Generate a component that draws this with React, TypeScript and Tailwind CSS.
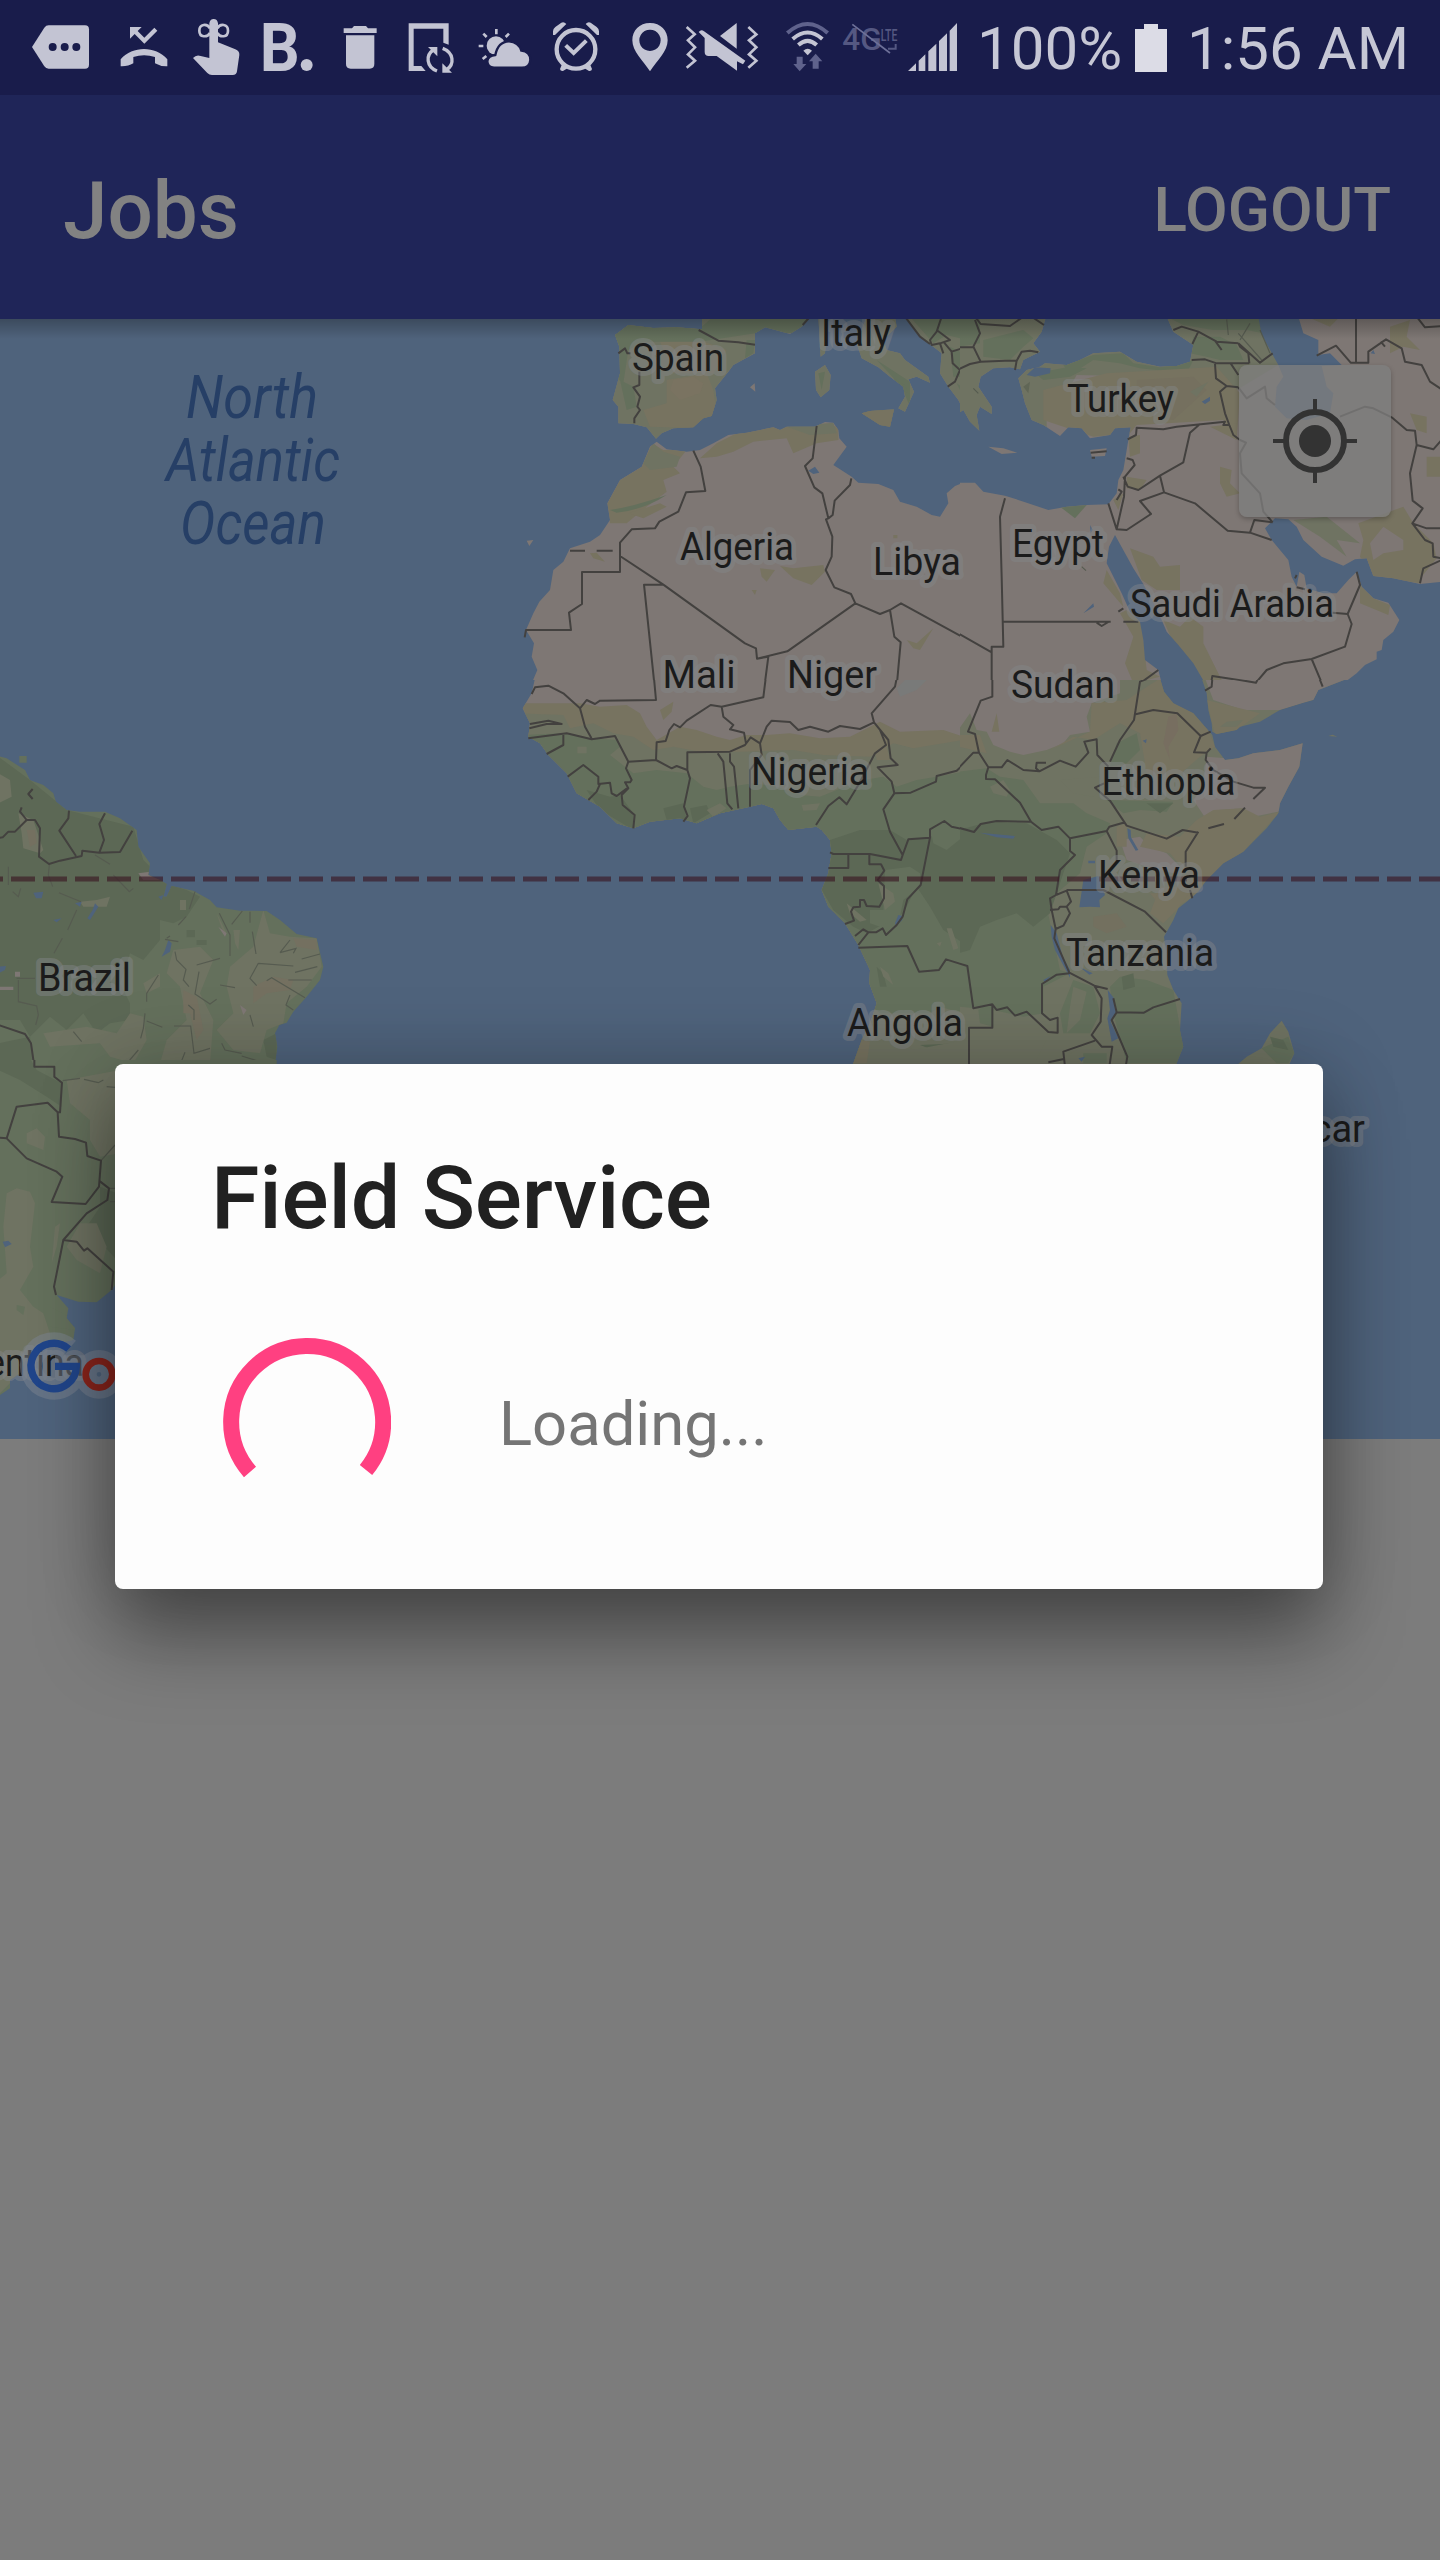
import React from "react";

const ROBOTO = "font-['Roboto',sans-serif]";

/* ---------- status bar ---------- */

type GlyphProps = { box: string; width: string; children: React.ReactNode };

function Glyph({ box, width, children }: GlyphProps) {
  return (
    <svg viewBox={box} className={`h-[95px] shrink-0 ${width}`} fill="#c3c4d3" stroke="none">
      {children}
    </svg>
  );
}

function StatusBar() {
  const ink = "#c3c4d3";
  const bar = "#191c4b";
  return (
    <div className="flex h-[95px] items-center bg-[#191c4b] text-[#c6c7d5]">
      <Glyph box="0 0 306 285" width="w-[102px]">
        <path d="M96 141 L133 83 Q138 76 146 76 H255 Q267 76 267 88 V194 Q267 206 255 206 H146 Q138 206 133 199 Z" />
        <g fill={bar}>
          <circle cx="158" cy="141" r="12" />
          <circle cx="194" cy="141" r="12" />
          <circle cx="229" cy="141" r="12" />
        </g>
      </Glyph>
      <Glyph box="306 0 234 285" width="w-[78px]">
        <path d="M390 81 H425 L413 93 L433 113 L463 83 L472 92 L433 131 L404 102 L390 116 Z" />
        <path d="M362 178 C398 137 466 137 502 178 V199 Q482 200 465 190 V171 Q432 160 400 171 V190 Q384 200 362 199 Z" />
      </Glyph>
      <Glyph box="540 0 210 285" width="w-[70px]">
        <path d="M628 70 Q630 57 641 57 Q652 57 654 70 V127 L706 148 Q719 153 718 165 L711 214 Q710 225 698 225 H636 Q628 225 622 219 L579 174 Q589 163 602 168 L628 174 Z" />
        <g fill="none" stroke={ink} strokeWidth="8">
          <path d="M630 85 C622 70 598 71 598 92 C598 113 622 113 630 99" />
          <path d="M652 85 C660 70 684 71 684 92 C684 113 660 113 652 99" />
        </g>
      </Glyph>
      <Glyph box="750 0 210 285" width="w-[70px]">
        <text x="779" y="212" fontSize="198" fontWeight="700" textLength="120" lengthAdjust="spacingAndGlyphs">
          B
        </text>
        <circle cx="920" cy="195" r="18" />
      </Glyph>
      <Glyph box="960 0 210 285" width="w-[70px]">
        <path d="M1031 85 H1056 L1062 78 H1098 L1104 85 H1130 V99 H1031 Z" />
        <path d="M1038 106 H1123 V192 Q1123 206 1109 206 H1052 Q1038 206 1038 192 Z" />
      </Glyph>
      <Glyph box="1170 0 231 285" width="w-[77px]">
        <path d="M1226 70 H1346 V134 L1330 128 V86 H1241 V198 H1264 L1277 213 H1226 Z" />
        <g fill="none" stroke={ink} strokeWidth="10">
          <path d="M1311 213 C1278 200 1277 165 1300 150" />
          <path d="M1328 145 C1362 158 1364 193 1340 209" />
        </g>
        <path d="M1284 141 H1312 V169 Z M1327 190 V218 H1356 Z" />
      </Glyph>
      <Glyph box="-39 0 219 285" width="w-[73px]">
        <circle cx="48" cy="137" r="28" />
        <g fill="none" stroke={ink} strokeWidth="8">
          <path d="M49 87 V103 M87 101 L77 111 M10 101 L20 111 M-4 138 H10 M8 177 L19 168" />
        </g>
        <path
          stroke={bar}
          strokeWidth="7"
          d="M42 203 Q22 202 22 183 Q24 167 46 165 Q54 125 87 124 Q116 126 124 152 Q151 155 151 180 Q149 203 126 203 Z"
        />
      </Glyph>
      <Glyph box="180 0 210 285" width="w-[70px]">
        <circle cx="288" cy="148" r="58" fill="none" stroke={ink} strokeWidth="13" />
        <path d="M257 136 L281 159 L319 122" fill="none" stroke={ink} strokeWidth="12" />
        <path d="M219 105 V94 Q219 86 226 81 L244 68 Q252 64 259 72 L225 105 Z M357 105 V94 Q357 86 350 81 L332 68 Q324 64 317 72 L351 105 Z" />
        <path d="M246 193 L240 207 Q241 214 249 213 L265 203 Z M330 193 L336 207 Q335 214 327 213 L311 203 Z" />
      </Glyph>
      <Glyph box="390 0 210 285" width="w-[70px]">
        <path
          fillRule="evenodd"
          d="M510 69 C478 69 457 92 457 121 C457 155 488 180 510 214 C532 180 563 155 563 121 C563 92 542 69 510 69 Z M510 89 A32 32 0 1 1 509.900 89 Z"
        />
      </Glyph>
      <Glyph box="600 0 270 285" width="w-[90px]">
        <g fill="none" stroke={ink} strokeWidth="8">
          <path d="M620 81 L644 103 L624 121 L645 142 L624 163 L645 182 L620 203" />
          <path d="M805 81 L829 103 L807 121 L829 142 L807 163 L829 182 L805 203" />
        </g>
        <path d="M770 69 V146 L720 108 Z" />
        <path d="M656 96 Q664 86 672 94 L796 182 L789 193 L771 184 V212 L710 168 H686 Q674 168 674 156 V114 Z" />
      </Glyph>
      <Glyph box="870 0 195 285" width="w-[65px]">
        <g fill="none" strokeWidth="12">
          <path d="M922 99 Q983 45 1043 99" stroke="#5f628c" />
          <path d="M938 117 Q983 78 1027 117" stroke={ink} />
          <path d="M955 135 Q983 110 1010 135" stroke={ink} />
        </g>
        <path d="M970 152 Q983 140 996 152 L983 166 Z" />
        <path fill="#5f628c" d="M950 170 H968 V192 H979 L959 214 L940 192 H950 Z M998 206 V184 H987 L1007 161 L1027 184 H1016 V206 Z" />
      </Glyph>
      <Glyph box="1065 0 201 285" width="w-[67px]">
        <g fill="#555882">
          <text x="1087" y="150" fontSize="94" fontWeight="500" textLength="118" lengthAdjust="spacingAndGlyphs">
            4G
          </text>
          <text x="1202" y="122" fontSize="52" fontWeight="500" textLength="50" lengthAdjust="spacingAndGlyphs">
            LTE
          </text>
        </g>
        <path d="M1117 73 L1230 159" fill="none" stroke="#6d7098" strokeWidth="5" />
        <path d="M1224 146 H1250 M1247 132 V148" fill="none" stroke="#555882" strokeWidth="6" />
      </Glyph>
      <Glyph box="1266 0 195 285" width="w-[65px]">
        <path d="M1284 213 L1308 190 V213 Z M1316 182 L1336 163 V213 H1316 Z M1345 154 L1369 131 V213 H1345 Z M1377 123 L1401 100 V213 H1377 Z M1409 92 L1431 69 V213 H1409 Z" />
      </Glyph>
      <span className="mt-[3px] ml-2.5 w-[146px] whitespace-nowrap text-[60px] leading-none">100%</span>
      <svg viewBox="0 0 32 48" className="ml-3 h-12 w-8 shrink-0" fill="#dcdce6">
        <path d="M9 0 H23 V5 H32 V48 H0 V5 H9 Z" />
      </svg>
      <span className="mt-[3px] ml-5 whitespace-nowrap text-[60px] leading-none">1:56 AM</span>
    </div>
  );
}

/* ---------- map ---------- */

const C = {
  desert: "#7e7774",
  tan: "#777360",
  olive: "#6f7362",
  green: "#64705c",
  dark: "#5c6855",
  water: "#4f637c",
  line: "#43413f",
  faint: "#565b50",
};

type SectionProps = {
  x: number;
  y: number;
  w: number;
  h: number;
  id: string;
  land: string;
  base: string;
  borders: string;
  shades: [string, string][];
  waters?: string;
  faint?: string;
};

/* One piece of the map; its paths are in thirds of a pixel. */
function Section({ x, y, w, h, id, land, base, borders, shades, waters, faint }: SectionProps) {
  return (
    <svg x={x} y={y} width={w} height={h} viewBox={`0 0 ${w * 3} ${h * 3}`}>
      <clipPath id={id}>
        <path d={land} />
      </clipPath>
      <path d={land} fill={base} />
      <g clipPath={`url(#${id})`}>
        {shades.map(([fill, d], i) => (
          <path key={i} d={d} fill={fill} />
        ))}
      </g>
      {waters && <path d={waters} fill={C.water} />}
      {faint && <path d={faint} fill="none" stroke={C.faint} strokeWidth="3.500" />}
      <path d={borders} fill="none" stroke={C.line} strokeWidth="6" strokeLinejoin="round" />
    </svg>
  );
}

const northWest: SectionProps = {
  x: 500, y: 310, w: 460, h: 370, id: "nw", base: C.desert,
  land:
    "M606 20 L606 58 530 52 460 54 385 45 345 75 358 110 360 190 338 270 355 290 355 340 400 342 440 352 468 386 485 370 520 355 580 352 610 325 635 318 650 270 645 235 685 185 700 165 765 130 765 70 795 52 870 72 905 50 930 20Z" +
    "M1100 20 L1070 100 1085 145 1135 172 1170 200 1210 230 1215 260 1195 295 1215 305 1242 245 1225 208 1250 200 1290 218 1285 200 1215 150 1200 130 1160 120 1150 90 1190 50 1185 20Z" +
    "M1085 310 L1110 303 1182 298 1170 350 1140 345ZM945 185 L975 165 992 195 988 240 962 262 948 240ZM955 20 L985 20 975 130 962 140ZM750 232 L764 220 766 245ZM80 692 L100 690 88 708Z" +
    "M1215 20 L1260 80 1300 110 1325 130 1320 190 1345 230 1375 270 1400 320 1400 20Z" +
    "M470 395 L450 410 425 470 360 510 322 580 330 630 300 675 270 695 210 715 190 755 160 780 150 840 118 875 100 910 78 960 102 1000 95 1040 112 1080 95 1120 1390 1120 1390 518 1365 528 1340 550 1345 580 1320 620 1295 615 1250 590 1200 575 1180 540 1135 522 1075 518 1055 500 1000 465 1040 410 1018 385 1015 360 1000 338 975 336 945 350 860 350 840 360 820 352 740 368 685 375 640 400 600 420 560 425 500 418Z",
  shades: [
    [C.olive, "M330 20 L780 20 780 140 680 190 650 340 590 360 460 395 330 350Z M1060 20 H1400 V380 L1060 350Z M940 160 H1000 V270 H940Z M950 20 H990 V150 H950Z"],
    [C.tan, "M500 210 L620 190 640 240 650 310 590 355 450 350 430 300 500 280Z M480 95 L600 90 680 120 640 190 520 190Z"],
    ["#7a7361", "M520 210 L580 200 610 220 600 250 540 270 510 240Z"],
    [C.green, "M340 40 L600 55 640 20 930 20 900 70 765 70 600 95 430 95 385 120 370 220 345 200Z M1230 20 H1400 V90 L1340 75 1300 100Z M1350 110 L1390 130 1390 200 1360 200Z M1130 150 L1230 215 1230 290 1205 230Z M360 210 L400 230 410 290 380 300Z M740 90 L765 90 760 130 735 145Z"],
    [C.tan, "M1085 300 H1190 V355 H1085Z M455 400 L490 420 560 420 520 470 540 490 490 510 500 545 440 590 380 640 330 640 322 580 360 510 425 470Z M600 445 L650 400 740 355 950 340 1015 350 1015 390 950 400 880 430 860 385 760 395 700 425 650 440Z"],
    [C.olive, "M460 400 L490 425 540 440 530 470 450 480 430 460Z M860 350 L1000 338 1010 370 930 375Z"],
    [C.tan, "M840 768 L880 775 970 765 975 785 935 825 880 805Z M780 775 L825 780 800 815 785 800Z M755 840 L770 840 765 855Z M270 730 L290 728 315 755 280 745Z M385 610 L480 580 500 590 430 625Z M1220 990 L1250 1000 1300 955 1260 1020 1240 1015Z M1180 675 H1192 V685 H1180Z M1385 525 L1400 520 1400 530Z"],
    [C.green, "M330 600 Q400 590 500 555 Q430 600 350 608Z M1180 205 L1215 225 1225 250 1200 235Z M955 190 L975 185 965 240Z M1370 220 L1400 240 1400 280Z"],
  ],
  waters: "M925 482 L945 470 958 488 940 492Z",
  borders:
    "M580 422 L602 470 616 543 558 547 535 605 478 635 465 655 395 658 360 698 360 786 246 786 246 882 207 908 213 960 78 960 74 982" +
    "M360 738 L490 824 735 1000 768 1015 771 1046 862 1024 1066 880M490 824 L432 824 465 1140M771 1046 L805 1040 792 1140" +
    "M950 348 L938 445 915 468 943 532 967 550 985 625 978 628 997 680 995 740 977 780 1003 832 1053 852 1066 880 1140 912 1170 900 1203 880 1440 1010" +
    "M985 625 L998 615 1004 572 1050 525 1054 505M1170 900 L1183 980 1202 997 1190 1130M355 130 L375 115 382 130 392 130M418 185 L418 225 400 232 420 260 412 290 420 300 403 325 403 340" +
    "M596 60 L655 92 715 97 765 104M908 45 L930 20M1215 20 L1260 80 1290 102M1325 20 L1310 65 1290 90 1295 105 1320 100 1350 90 1310 60M1320 100 L1330 130M1330 95 L1355 125 1395 112M1355 125 L1358 160 1380 180 1395 175M1380 180 L1365 215 1343 230" +
    "M210 722 H255M290 722 H338",
};

const northEast: SectionProps = {
  x: 960, y: 310, w: 480, h: 370, id: "ne", base: C.desert,
  land:
    "M-5 20 L258 20 245 65 220 100 240 125 190 150 180 178 150 172 100 175 62 200 55 230 75 260 95 290 95 312 60 290 50 315 58 362 30 335 10 300 -5 310Z" +
    "M175 205 L200 180 240 170 255 160 320 165 360 150 400 130 480 125 530 155 600 170 650 168 690 155 700 105 640 65 620 20 L1450 20 L1450 815 1380 822 1300 805 1240 798 1220 745 1185 748 1150 767 1085 740 1030 690 1010 650 985 628 945 625 915 655 935 690 985 750 995 800 1010 830 1018 785 1033 795 1040 835 1090 850 1130 850 1165 810 1190 785 1205 830 1240 865 1285 878 1318 930 1300 965 1270 990 1265 1020 1250 1025 1250 1048 1215 1065 1190 1090 1150 1120 L-5 1120 -5 518 45 518 70 545 135 557 200 578 265 600 320 590 380 585 445 583 470 550 475 510 490 480 505 390 512 352 465 355 450 375 390 385 365 355 325 352 300 378 250 345 215 330 195 280 185 240Z" +
    "M390 420 L440 415 435 438 395 440ZM85 410 L130 415 172 428 125 432Z",
  shades: [
    [C.olive, "M-5 20 H260 V370 H-5Z M175 110 L700 110 700 200 600 200 350 195 330 230 250 240 200 330 170 300Z M620 20 H900 L955 165 830 240 780 190 690 180 640 80Z"],
    [C.green, "M70 90 L190 60 220 85 190 110 150 150 70 140Z M-5 20 L60 20 60 100 -5 110Z M310 165 L400 135 490 130 520 160 600 172 700 150 680 190 540 175 480 160 400 150 330 195Z M700 80 L780 80 830 105 850 150 780 150 740 140 690 130Z M620 20 L900 20 910 70 860 60 760 60 670 45Z M225 190 L330 170 380 175 330 200 250 210Z"],
    [C.tan, "M250 240 L440 190 700 175 770 170 840 250 830 390 790 330 530 345 510 370 400 380 250 330Z"],
    ["#75705f", "M530 210 L700 200 740 240 640 330 530 310Z"],
    [C.tan, "M505 380 L540 375 540 430 510 440Z M500 500 L560 510 540 540 500 535Z M780 470 L815 480 810 520 840 550 800 560 780 520Z M750 350 L830 340 830 390Z M510 715 L580 740 600 770 660 765 660 840 590 840 545 810Z M610 930 L660 950 690 920 730 950 730 1000 790 1120 730 1120 640 1000Z M500 900 L545 940 560 1080 600 1100 520 1120 495 1060 520 980 480 910Z M440 780 L480 850 490 890 430 820Z M1195 640 L1330 590 1360 640 1420 700 1430 745 1385 800 1380 820 1240 800 1200 740 1210 690Z M1200 810 L1240 865 1290 885 1285 915 1200 880Z M1040 20 H1140 L1110 50Z M1290 50 L1350 30 1340 80 1380 120 1330 110 1290 130Z M1350 310 L1400 320 1400 370 1370 360Z M1400 440 H1440 V500 H1400Z M460 570 L490 550 475 600Z"],
    [C.green, "M300 590 L340 570 380 585 345 625Z"],
    [C.desert, "M1230 700 L1270 650 1330 690 1330 720 1270 730 1240 750Z"],
    ["#606656", "M190 230 L210 215 205 250Z"],
    [C.olive, "M1000 630 L1100 620 1200 700 1130 690 1160 740 1080 680Z M690 245 L745 215 710 260Z"],
  ],
  waters:
    "M895 20 L1015 20 1030 70 1075 90 1075 135 1110 130 1145 165 1085 168 1100 230 1120 250 1110 310 1040 330 980 325 945 290 950 230 970 200 955 165 905 75Z" +
    "M465 675 L520 775 550 822 575 870 605 930 620 965 655 1005 700 1060 735 1120 605 1120 595 1080 555 1050 550 990 540 935 510 905 485 850 440 760 447 710Z" +
    "M200 195 L225 172 272 175 270 190 225 200Z M725 275 L750 260 750 272 735 282Z M370 910 L400 880 402 890Z M1232 130 L1240 120 1245 132Z M390 645 L398 660 392 670Z",
  faint:
    "M835 70 L905 150M800 28 L805 75M870 40 L840 90M900 60 L930 130M40 235 L55 250M365 770 L378 782",
  borders:
    "M45 20 L62 42 150 48 190 20M215 20 L252 45M45 30 L60 70 40 110 62 155M-5 178 L30 162 62 155 135 152 170 152 185 125 210 122 235 127M-5 112 L40 112M170 152 L165 180" +
    "M640 60 L665 50 715 65 770 95 835 100M715 65 L697 102M765 92 L785 120M835 100 L900 158 938 130M835 100 L840 110 865 130 868 160M695 150 L735 148 770 160 868 160M765 162 L768 205 800 228 835 232M812 160 L835 195" +
    "M800 228 L780 245 795 310 808 345 820 375 840 390M503 388 L528 375 530 353 610 358 650 350 795 335 790 345 808 345M720 342 L690 368 670 457 600 497 535 540 503 530 490 500M600 497 L612 547 540 573 573 612 500 660 470 658 445 580M612 547 L705 580 803 662 870 668 935 690M870 668 L883 630 938 637M500 445 L518 450 524 465 495 500 492 560 470 658M475 538 L485 545 470 570" +
    "M135 565 L120 620 125 800 130 1010 95 1010 95 1140M-5 970 L95 1027M130 935 H452M490 935 H535M410 938 L425 948 445 936M475 905 L490 895" +
    "M1190 785 L1200 825 1163 912 1175 942 1155 1010 1055 1047 970 1060 920 1080 888 1118 757 1098 750 1140M1055 1047 L1090 1130M1163 912 L1118 908M1070 137 L1128 107 1172 158 1225 158 1225 125 1278 88 1325 115 1335 155 1385 165 1410 215 1445 238M1188 20 V158M1370 20 L1395 52 1445 48M1262 95 L1275 110" +
    "M1295 322 L1340 360 1365 362 1370 405 1420 418 1445 390M1370 405 L1350 490 1358 572 1388 595 1357 640 1400 655 1445 655M1357 640 L1395 690 1418 700 1420 740 1445 745M1445 750 L1390 775 1380 820" +
    "M835 232 L860 265 915 230 920 265 945 285M1140 320 L1215 290 1240 295 1295 322M840 390 L858 398 840 430 845 490 900 550 910 605 938 637M595 1080 L540 1120M392 428 L440 424M395 443 H405M1005 805 L1010 795M1010 832 L1035 838",
};

const west: SectionProps = {
  x: 500, y: 680, w: 460, h: 400, id: "we", base: C.desert,
  land:
    "M105 -5 L95 40 68 85 90 130 85 170 120 190 145 225 200 280 230 340 300 380 350 430 400 445 450 425 540 415 590 430 660 400 750 380 785 372 820 385 840 420 865 450 950 440 965 450 990 480 995 520 985 580 965 630 985 680 1035 730 1075 795 1110 870 1108 910 1130 970 1110 1030 1085 1080 1060 1150 1060 1210 1390 1210 1390 -5Z",
  shades: [
    [C.tan, "M60 70 L240 70 300 80 380 75 420 100 440 140 470 180 540 140 590 150 650 170 690 180 740 165 800 165 870 160 960 175 1050 170 1140 125 1200 155 1330 150 1390 170 1390 1210 60 1210Z M480 90 L520 65 515 95 490 120Z"],
    [C.olive, "M60 100 L190 105 210 145 280 130 340 160 400 170 460 210 520 200 600 215 720 215 880 210 970 225 1110 230 1180 190 1240 205 1390 180 1390 1210 60 1210Z"],
    [C.green, "M60 165 L190 160 270 175 350 180 360 200 330 225 400 280 470 270 560 280 610 320 650 330 690 320 760 310 830 320 900 345 960 350 1010 330 1090 300 1150 290 1190 320 1250 300 1310 290 1390 275 1390 1000 1320 980 1290 1000 1140 1000 1060 930 960 650 400 460 60 300Z"],
    [C.dark, "M260 330 L330 350 360 345 400 400 400 450 300 390Z M490 385 L550 370 560 420 500 420Z M570 385 L620 375 630 400 580 430Z M990 480 L1080 450 1170 450 1220 480 1290 470 1330 460 1390 470 1390 790 1330 750 1290 680 1250 620 1210 700 1100 760 1060 740 1000 690 960 620Z M1130 860 L1150 880 1160 920 1140 920Z M1260 1095 L1380 1090 1390 1110 1300 1110Z"],
    [C.green, "M1290 440 L1350 430 1390 445 1390 470 1340 510 1300 490Z M1155 570 L1230 560 1260 580 1260 620 1210 660 1200 710 1140 740 1110 730 1110 690 1150 690Z"],
    [C.olive, "M1135 610 L1180 640 1185 665 1155 690Z M1040 670 L1100 720 1080 725 1050 700Z M620 390 L660 370 680 385 640 410Z M905 375 L960 370 950 390 910 392Z M1060 1090 L1200 1080 1240 1110 1390 1080 1390 1200 1060 1200Z M1140 860 L1165 880 1180 915 1150 890Z M1310 790 L1325 785 1320 800Z M1340 745 L1355 745 1375 805 1360 810Z"],
    [C.tan, "M1085 1080 L1110 1085 1100 1150 1060 1150Z M1125 215 L1160 200 1170 240 1130 240Z"],
    ["#797a79", "M1190 25 L1220 -5 1285 -5 1250 30 1200 50Z"],
    [C.olive, "M232 200 h28 v20 h-28Z"],
  ],
  waters: "M1195 705 L1208 708 1207 720 1188 737 1185 730Z",
  borders:
    "M95 42 L105 22 145 17 190 40 240 85 260 60 285 72 300 62 468 60 462 -5M240 85 L255 140 272 170 275 178 345 168 385 245 468 240 515 265 530 258 562 270 562 217 690 215 735 195 752 172 780 190 800 140 815 122 870 126 895 150 930 140 985 155 1020 138 1080 147 1122 127M275 178 L200 160 85 175M88 145 L140 132 185 132 145 122 90 132M190 165 L190 195 140 222" +
    "M385 245 L378 265 395 300 390 307 375 307 385 325 365 345 368 375 404 405 400 445M203 290 L250 255 295 290 295 312 330 308 335 340 350 348 385 322M300 312 L290 335 265 360M562 270 L570 295 552 380 563 408 550 425M468 240 L470 187 497 183 508 150 522 132 540 142 560 122 632 75 665 80 790 52 797 -5M665 80 L670 110 700 135 690 148 732 158 738 190M653 220 L670 245 682 370 697 388M690 220 L690 245 702 260 715 385M750 380 V270L785 225 780 190" +
    "M948 435 L985 378 1018 352 1040 373 1075 315 1125 220 1158 195 1140 150 1122 127 1115 100 1185 20 1190 -5M1122 127 L1165 180 1172 235 1193 255 1133 262 1175 305 1183 340 1150 388 1170 455 1208 525 1225 478 1290 473 1290 448 1333 423 1355 440 1425 455M1183 340 L1232 338 1308 305 1310 288 1370 272 1425 220" +
    "M990 517 L1000 522 1110 522 1203 540 1208 525M1045 522 V564 H985M1108 522 V553 H1143 L1153 572 1133 600 1152 618 1152 655 1138 680 1100 678 1092 660 1080 660 1080 680 1060 682 1053 695 1062 722 1035 732M1290 473 L1262 615 1222 658 1208 710 1190 735 1158 765 1148 745 1128 757 1105 757 1075 795M1065 768 L1090 748 1105 757M1075 803 L1222 798 1257 875 1317 870 1338 838 1402 858",
};

const east: SectionProps = {
  x: 960, y: 680, w: 480, h: 500, id: "ea", base: C.olive,
  land:
    "M-5 -5 L600 -5 612 35 640 70 700 100 735 140 757 165 765 200 795 240 835 235 880 220 960 210 1028 190 1018 260 985 320 960 370 955 400 920 445 890 475 850 515 790 550 740 600 715 635 680 665 655 685 640 720 612 770 620 830 622 885 640 930 665 970 660 1050 670 1100 650 1150 650 1190 -5 1190Z" +
    "M725 -5 L740 40 745 90 755 130 757 155 770 162 830 150 840 140 900 125 960 90 1030 68 1060 60 1075 30 1165 -5Z" +
    "M825 1160 L860 1130 905 1105 930 1060 965 1022 985 1055 1003 1120 985 1160ZM1105 168 L1118 164 1132 170Z",
  shades: [
    [C.desert, "M-5 -5 L480 -5 480 40 395 70 380 110 390 155 330 165 310 190 260 210 190 225 150 215 100 195 80 155 50 150 30 100 -5 150Z M735 -5 H1200 L1060 60 960 90 850 90 760 60Z M740 230 L800 235 1040 185 1000 330 955 395 880 410 850 385 780 390 740 420 700 360 730 320Z M480 480 L540 470 570 500 620 520 660 560 640 580 560 560 500 540Z"],
    [C.tan, "M395 70 L500 60 600 -5 740 140 765 200 720 230 640 300 560 280 540 160 480 130 400 180 340 170 270 210 390 155Z M740 60 L900 100 830 150 765 165Z M710 420 L760 390 850 385 900 410 960 395 850 515 740 600 700 650 620 700 570 640 640 640 680 580 630 520 540 500 560 460 660 470Z M470 440 L500 430 500 500 470 500Z M-5 165 L60 165 80 220 -5 200Z"],
    [C.green, "M-5 275 L80 265 120 290 190 300 240 370 340 370 380 400 450 430 440 460 380 500 360 580 290 640 260 680 300 870 330 880 250 920 250 1000 190 1010 100 990 -5 980Z M470 190 L530 160 540 210 500 250 450 260Z M440 360 L640 365 620 395 540 390 490 400Z M480 890 L560 900 640 930 670 1100 650 1150 500 1150 460 1000 450 920Z M340 900 L400 920 420 1000 390 1060 310 1060 300 1000Z M370 1120 H440 V1150 H370Z M55 990 L100 970 100 1040 60 1030Z M905 1105 L985 1070 1003 1120 985 1150 950 1150Z"],
    [C.dark, "M-5 450 L90 425 200 430 290 480 330 520 290 640 270 700 220 740 170 700 110 720 60 740 30 810 -5 820Z M485 890 L520 880 525 920 490 930Z M560 370 L640 370 600 400Z M930 1070 L970 1080 985 1110 940 1100Z"],
    [C.olive, "M90 320 L130 300 150 330 140 350 100 340Z M340 920 L380 935 360 1020 320 1060 330 980Z M260 1080 L400 1080 300 1140 230 1140Z M420 290 L300 300 340 340 400 350 430 320Z M800 125 L850 120 830 140 780 140Z"],
    ["#776e60", "M625 110 L650 100 655 150 625 200 630 240 610 190Z"],
    ["#73705f", "M400 710 L470 700 500 740 440 760 400 740Z"],
    [C.tan, "M95 155 L110 100 118 155Z M600 620 L700 620 650 690 610 730 570 700Z"],
  ],
  waters:
    "M370 600 L415 588 435 645 418 660 420 682 390 680 358 682Z M272 735 L290 760 308 830 330 870 330 893 285 810 275 770Z M443 930 L462 955 468 1000 452 1025 475 1075 455 1085 442 1015 450 990Z M502 445 L512 450 513 472 535 510 527 512 505 475Z M548 182 L560 178 558 190Z M60 458 L165 468 160 476 110 472Z M360 862 L398 880 388 884Z M250 900 L272 888 255 908Z M385 542 H405 V550 H385Z M355 1135 L375 1130 365 1145Z",
  borders:
    "M97 -5 L97 50 62 62 24 155 45 162 57 218 85 262 78 285 78 297 105 298 180 368 213 425 245 450 295 440 330 475 330 513 345 525 300 570 288 645M85 262 L125 262 142 240 190 270 238 274 300 242 347 260 385 218 373 185 410 178 412 225 445 260M238 274 L228 265 230 248 258 248M-5 265 L40 218 57 218M-5 443 L42 456 62 432 110 423 213 425M330 475 L440 453 448 440 495 427M440 453 L470 512 470 545" +
    "M450 245 L480 180 522 120 540 5 565 -5M527 103 L580 90 652 100 722 168 752 155M722 168 L702 217 740 218 752 205M740 218 L737 240 760 270 820 305 880 323 915 323 880 357M855 383 L823 417M792 432 L745 445M715 458 L668 450 620 476 500 437 450 362 405 323 432 310M715 455 L677 515 677 560M690 630 L697 655M320 630 H430 L555 695 618 757" +
    "M288 645 L320 632 333 665 320 680 330 700 310 737 287 747 275 690 270 655 288 645M270 690 L295 688 300 680 318 680M287 747 L283 775 328 878 403 917 443 927M328 880 L290 884 246 912 246 1000 270 1020 293 1013 293 1058 265 1056 200 995 165 1007 142 982 110 990 97 973 40 985 22 858 -5 850M97 973 V1043 H27 V1160M403 917 L425 955 422 1025 395 1065 425 1100 457 1100 448 1160M405 1082 L310 1115 315 1160M312 1137 L265 1147M460 955 L470 997 552 998 580 982 660 957M470 997 L455 1020 502 1130 497 1160M735 32 L755 20 757 -5M810 -5 L888 8 895 -5M1078 -5 L1088 20",
};

const brazil: SectionProps = {
  x: 0, y: 720, w: 360, h: 340, id: "br", base: C.green,
  land:
    "M-5 108 L20 115 75 150 90 180 130 195 160 220 168 245 200 270 240 275 315 275 360 295 410 330 415 380 450 430 445 465 480 480 500 492 490 530 500 530 515 498 580 512 630 540 650 562 720 572 800 573 840 600 890 642 950 655 970 740 960 780 920 830 880 875 860 908 838 915 825 940 832 980 825 1030 -5 1030ZM58 108 h22 v20 h-22Z",
  shades: [
    [C.dark, "M-5 110 L90 180 200 270 400 320 430 420 500 490 560 510 600 530 560 590 520 610 480 600 480 660 430 720 390 700 360 790 390 850 390 900 330 910 290 940 250 880 200 930 150 890 90 950 60 900 -5 900Z M-5 970 L90 950 100 1030 -5 1030Z M590 660 h30 v15 h-30Z M560 630 h25 v22 h-25Z M790 960 L830 940 830 1020 800 1010Z"],
    [C.olive, "M-5 160 L30 180 35 230 -5 250Z M55 280 L100 300 130 390 120 400 70 385 65 340Z M240 545 L290 540 330 530 320 560 250 560Z M520 690 L600 680 640 720 600 820 640 900 630 1030 480 1030 500 960 560 900 540 800 500 760Z M690 740 L760 680 790 570 810 640 870 650 950 655 965 740 920 800 860 850 850 910 800 930 780 1000 700 990 650 930 700 880 680 800Z M130 940 L260 920 350 940 390 880 430 890 440 960 400 1030 330 1010 300 970 150 980Z M430 790 L480 760 480 800 440 820Z M650 580 L680 640 670 640Z M700 630 L720 630 715 690 705 670Z M540 540 h18 v30 h-18Z"],
    ["#747060", "M80 330 L105 330 110 370 90 380Z M760 800 L820 770 880 780 870 810 800 820 760 850Z M550 810 L590 830 610 930 590 960 570 880 550 880Z M880 655 L950 660 950 690 890 680Z"],
    [C.desert, "M415 460 L450 455 490 480 430 480Z M720 855 L740 870 730 885Z M655 620 L680 640 675 650Z M0 800 h40 v10 h-40Z M45 755 h15 v15 h-15Z"],
  ],
  waters:
    "M100 518 L130 515 125 535 108 535Z M225 550 L245 545 240 560Z M285 550 L295 560 270 600 262 595 278 570Z M505 660 L515 670 510 695 485 710 495 690Z M475 530 L490 525 485 540Z M-5 740 L18 738 15 750 -5 760Z M160 600 L185 595 170 607Z",
  faint:
    "M177 518 L243 545M230 570 L203 630M187 655 L162 700M148 435 L145 465 158 500M25 440 V495M38 515 L55 530 62 505M340 465 L388 515 400 505M285 405 L330 433M50 775 H105M55 780 V845L110 858 115 885 107 915M585 515 L568 567M558 590 L535 615M727 573 L695 613M750 575 V608M757 635 L768 702M658 580 L690 645 690 708M495 658 L535 665M500 655 L510 648M525 695 L530 720 558 748 550 780 567 800M597 755 L585 822 630 852 650 838M590 735 L660 715M660 795 L705 803M475 765 L440 820 440 845M435 880 L430 925 422 955M440 903 L487 922M522 918 H572 L582 1000 630 985M415 990 L385 1025M515 1022 L545 1022 555 997M665 970 L675 990 725 1000M725 1008 L790 1028M775 730 L750 775 770 797M775 730 L880 738M840 698 L870 660M840 698 L888 685 880 700M905 717 L960 702M885 757 L952 740M865 780 H935M800 782 L815 773 915 833M870 825 L858 855 880 870M750 885 L760 920M565 855 L582 870 582 900M220 935 L245 965",
  borders:
    "M-5 354 L8 352 25 335 45 335 80 300 105 300 120 325 117 410 147 432 180 422 245 408 247 392 298 398 360 396 397 332M80 300 L60 275 65 262M207 272 L205 295 178 332 228 408M315 280 L298 312 312 360 298 398M98 207 L85 222 98 237M-5 915 L75 942 93 970 103 1040",
};

const plata: SectionProps = {
  x: 0, y: 1060, w: 360, h: 379, id: "pl", base: C.green,
  land: "M-5 -5 L830 -5 830 20 370 20 370 640 335 690 290 727 235 725 170 705 205 745 200 775 225 805 220 840 90 870 60 940 30 960 30 985 0 1005 -5 1005Z",
  shades: [
    [C.dark, "M-5 -5 L90 -5 110 30 185 70 185 140 140 110 60 60 -5 30Z M300 380 L350 400 350 600 260 500 300 440Z"],
    [C.olive, "M200 60 L360 30 360 280 300 290 270 240 270 180 210 130Z M80 220 L110 205 135 230 130 270 80 250Z M20 400 L50 385 90 395 105 430 90 560 100 620 60 690 100 740 130 760 150 820 150 850 100 870 60 940 -5 1005 -5 660 20 640 10 500Z M240 490 L290 490 320 560 300 640 230 600 200 560Z M165 500 L180 490 170 560 155 610Z"],
    [C.green, "M50 735 L75 740 70 765 50 750Z M150 740 L225 780 225 810 150 800Z"],
  ],
  waters: "M8 545 L25 542 35 552 15 562Z",
  faint: "M188 62 L240 55M252 58 L295 68 310 60M303 302 L345 255M320 80 L345 82M330 385 L345 385M330 425 H345",
  borders:
    "M103 -10 V20 H163 V50 L186 68 180 157 173 157 177 230 225 237 258 248 262 288 303 302 297 380 257 432 155 426 187 350 170 335 80 295 20 235 -5 233M20 235 L50 140 143 128 173 157M297 362 L327 385 322 420 260 460 190 540 230 545 252 572 262 565 340 635 335 690M190 540 L162 680 168 705",
};

const labels: [string, number, number, number][] = [
  ["Spain", 632, 370.500, 92],
  ["Italy", 821, 345.500, 70],
  ["Algeria", 680, 560, 114],
  ["Libya", 873, 574.500, 88],
  ["Mali", 662.500, 687.500, 73],
  ["Niger", 787, 687.500, 90],
  ["Nigeria", 751, 785, 118],
  ["Angola", 847, 1036, 116],
  ["Turkey", 1067, 411.500, 107],
  ["Egypt", 1012, 556.500, 92],
  ["Saudi Arabia", 1130, 616.500, 204],
  ["Sudan", 1011, 697.500, 104],
  ["Ethiopia", 1101.500, 795, 134],
  ["Kenya", 1098, 887.500, 102],
  ["Tanzania", 1066, 966, 148],
  ["Brazil", 38, 990.500, 93],
];

function MapView() {
  return (
    <div className="relative h-[1120px] w-full bg-[#4f637c]">
      <svg viewBox="0 319 1440 1120" className={`block h-[1120px] w-full ${ROBOTO}`}>
        <Section {...northWest} />
        <Section {...northEast} />
        <Section {...west} />
        <Section {...east} />
        <Section {...brazil} />
        <Section {...plata} />
        <path d="M-21 879 H1440" stroke="#3a1822" strokeOpacity="0.640" strokeWidth="5" strokeDasharray="24 8" />
        <g fontSize="38" fill="#1b1b1b" stroke="#84878a" strokeOpacity="0.450" strokeWidth="10" strokeLinejoin="round" paintOrder="stroke">
          {labels.map(([name, x, y, w]) => (
            <text key={name} x={x} y={y} textLength={w} lengthAdjust="spacingAndGlyphs">
              {name}
            </text>
          ))}
          <text x="1365" y="1142" textAnchor="end">Madagascar</text>
          <text x="-69" y="1376" textLength="153" lengthAdjust="spacingAndGlyphs">Argentina</text>
        </g>
        <g fontSize="60" fontStyle="italic" fill="#263f66">
          <text x="186" y="417.500" textLength="132" lengthAdjust="spacingAndGlyphs">North</text>
          <text x="166" y="480.500" textLength="174" lengthAdjust="spacingAndGlyphs">Atlantic</text>
          <text x="180" y="543.500" textLength="146" lengthAdjust="spacingAndGlyphs">Ocean</text>
        </g>
        <g transform="translate(0 1060) scale(0.33333)" fill="none">
          <g stroke="#7c8490" opacity="0.500" strokeWidth="66">
            <path d="M206 867 A68 68 0 1 0 229 919 H165" />
            <circle cx="297" cy="943" r="40" />
          </g>
          <path d="M206 867 A68 68 0 1 0 229 919 H165" stroke="#20458a" strokeWidth="22" />
          <circle cx="297" cy="943" r="40" stroke="#8a241c" strokeWidth="20" />
        </g>
      </svg>
      <div className="absolute inset-x-0 top-0 h-5 bg-linear-to-b from-black/25 to-transparent" />
      <button className="absolute top-[46px] right-[49px] flex size-[152px] items-center justify-center rounded-[8px] bg-[#7f7f7f]/75 shadow-[0_2px_5px_rgba(0,0,0,0.25)]">
        <svg viewBox="-42 -42 84 84" className="size-[84px]">
          <circle r="29" fill="none" stroke="#333333" strokeWidth="6" />
          <circle r="16" fill="#333333" />
          <path d="M0 -42 V-29 M0 42 V29 M-42 0 H-29 M42 0 H29" stroke="#333333" strokeWidth="4" />
        </svg>
      </button>
    </div>
  );
}

/* ---------- dialog ---------- */

function LoadingDialog() {
  return (
    <div className="absolute top-[1064px] left-[115px] h-[525px] w-[1208px] rounded-[8px] bg-[#fdfdfd] pt-[84px] pl-[96px] shadow-[0_48px_80px_rgba(0,0,0,0.38),0_0_80px_rgba(0,0,0,0.2)]">
      <h2 className="text-[88px] leading-[100px] font-medium tracking-[-0.2px] text-[#212121]">Field Service</h2>
      <div className="mt-[89px] flex items-center pl-3">
        <svg viewBox="-84 -84 168 168" className="size-[168px]">
          <path d="M-57 51 A76 76 0 1 1 59 49" fill="none" stroke="#ff4081" strokeWidth="16" />
        </svg>
        <span className="mt-1.5 ml-[108px] text-[61.500px] leading-[72px] text-[#757575]">Loading...</span>
      </div>
    </div>
  );
}

export default function App() {
  return (
    <div className={`relative h-[2560px] w-[1440px] overflow-hidden bg-[#7c7c7c] ${ROBOTO}`}>
      <StatusBar />
      <header className="flex h-[224px] items-center justify-between bg-[#1f2558] pr-[49px] pl-[63px] text-[#828282]">
        <h1 className="mt-[7px] text-[80px] leading-none font-medium">Jobs</h1>
        <button className="mt-[5px] text-[62px] leading-none font-medium">LOGOUT</button>
      </header>
      <MapView />
      <LoadingDialog />
    </div>
  );
}
